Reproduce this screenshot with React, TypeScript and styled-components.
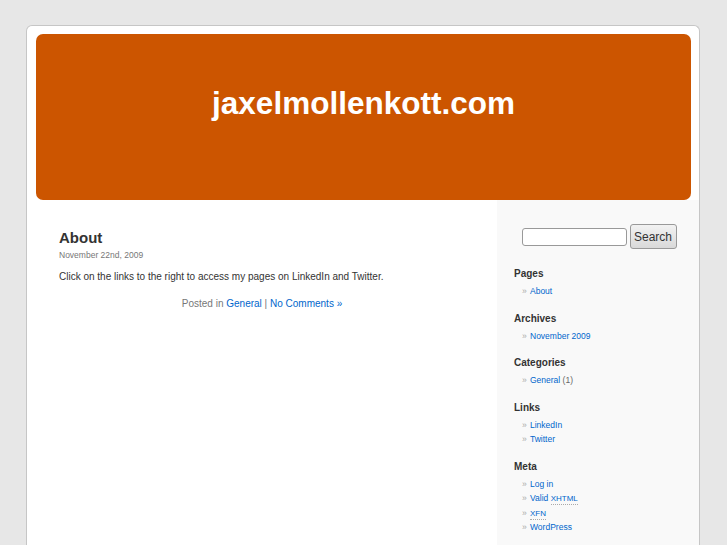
import styled, { createGlobalStyle } from "styled-components";

const GlobalStyle = createGlobalStyle`
  html, body {
    margin: 0;
    padding: 0;
    background: #e7e7e7;
    font-family: "Liberation Sans", Arial, sans-serif;
    color: #333;
  }
  body {
    padding-top: 25px;
    height: 520px;
    overflow: hidden;
  }
`;

const Page = styled.div`
  width: 672px;
  min-height: 600px;
  margin: 0 0 0 26px;
  background: #fff;
  border: 1px solid #c6c6c6;
  border-bottom: none;
  border-radius: 6px 6px 0 0;
`;

const Header = styled.div`
  height: 166px;
  margin: 8px 8px 0 9px;
  background: #cc5500;
  border-radius: 7px;
  padding-top: 51px;
  box-sizing: border-box;
`;

const Title = styled.h1`
  margin: 0;
  text-align: center;
  color: #fff;
  font-size: 31.5px;
  line-height: 36px;
  font-weight: bold;
`;

const Body = styled.div`
  display: flex;
  min-height: 400px;
`;

const Content = styled.div`
  flex: 1;
  padding: 29px 32px 0 32px;
`;

const PostTitle = styled.h2`
  margin: 0;
  font-size: 15px;
  line-height: 18px;
  font-weight: bold;
  color: #333;
`;

const PostDate = styled.small`
  display: block;
  margin-top: 2px;
  font-size: 8.5px;
  line-height: 12px;
  color: #777;
`;

const PostText = styled.p`
  margin: 9px 0 0;
  font-size: 10px;
  line-height: 14px;
  color: #333;
`;

const PostMeta = styled.p`
  margin: 13px 0 0;
  text-align: center;
  font-size: 10px;
  line-height: 14px;
  color: #777;
`;

const Link = styled.a`
  color: #06c;
  text-decoration: none;
`;

const Sidebar = styled.div`
  width: 202px;
  background: #f9f9f9;
  padding: 24px 0 0 17px;
  box-sizing: border-box;
`;

const SearchForm = styled.form`
  display: flex;
  align-items: center;
  justify-content: center;
  gap: 3px;
  margin: 0 0 18px -15px;
`;

const SearchInput = styled.input`
  width: 105px;
  height: 18px;
  box-sizing: border-box;
  border: 1px solid #999;
  border-radius: 3px;
  background: #fff;
  padding: 0 3px;
  font-size: 10px;
`;

const SearchButton = styled.button`
  width: 47px;
  height: 25px;
  box-sizing: border-box;
  border: 1px solid #999;
  border-radius: 3px;
  background: linear-gradient(#f2f2f2, #d9d9d9);
  font-family: "Liberation Sans", Arial, sans-serif;
  font-size: 12px;
  color: #333;
  padding: 0;
`;

const Section = styled.div`
  margin-bottom: 13px;
`;

const SectionTitle = styled.h3`
  margin: 0 0 4px;
  font-size: 10px;
  line-height: 13px;
  font-weight: bold;
  color: #333;
`;

const List = styled.ul`
  list-style: none;
  margin: 0;
  padding: 0 0 0 8px;
`;

const Item = styled.li`
  height: 14.5px;
  font-size: 8.5px;
  line-height: 14.5px;
  color: #666;
  &::before {
    content: "\\00BB";
    display: inline-block;
    width: 8px;
    color: #aaa;
  }
`;

const Abbr = styled.abbr`
  font-size: 8px;
  line-height: 0;
  text-decoration: none;
  border-bottom: 1px dotted #aaa;
  padding-bottom: 1px;
`;

const sections: { title: string; items: React.ReactNode[] }[] = [
  { title: "Pages", items: [<Link href="#">About</Link>] },
  { title: "Archives", items: [<Link href="#">November 2009</Link>] },
  {
    title: "Categories",
    items: [
      <>
        <Link href="#">General</Link> (1)
      </>,
    ],
  },
  {
    title: "Links",
    items: [<Link href="#">LinkedIn</Link>, <Link href="#">Twitter</Link>],
  },
  {
    title: "Meta",
    items: [
      <Link href="#">Log in</Link>,
      <Link href="#">
        Valid <Abbr title="eXtensible HyperText Markup Language">XHTML</Abbr>
      </Link>,
      <Link href="#">
        <Abbr title="XHTML Friends Network">XFN</Abbr>
      </Link>,
      <Link href="#">WordPress</Link>,
    ],
  },
];

export default function App() {
  return (
    <>
      <GlobalStyle />
      <Page>
        <Header>
          <Title>jaxelmollenkott.com</Title>
        </Header>
        <Body>
          <Content>
            <PostTitle>About</PostTitle>
            <PostDate>November 22nd, 2009</PostDate>
            <PostText>
              Click on the links to the right to access my pages on LinkedIn and Twitter.
            </PostText>
            <PostMeta>
              Posted in <Link href="#">General</Link> | <Link href="#">No Comments »</Link>
            </PostMeta>
          </Content>
          <Sidebar>
            <SearchForm onSubmit={(e) => e.preventDefault()}>
              <SearchInput type="text" />
              <SearchButton type="submit">Search</SearchButton>
            </SearchForm>
            {sections.map((s) => (
              <Section key={s.title}>
                <SectionTitle>{s.title}</SectionTitle>
                <List>
                  {s.items.map((it, i) => (
                    <Item key={i}>{it}</Item>
                  ))}
                </List>
              </Section>
            ))}
          </Sidebar>
        </Body>
      </Page>
    </>
  );
}
